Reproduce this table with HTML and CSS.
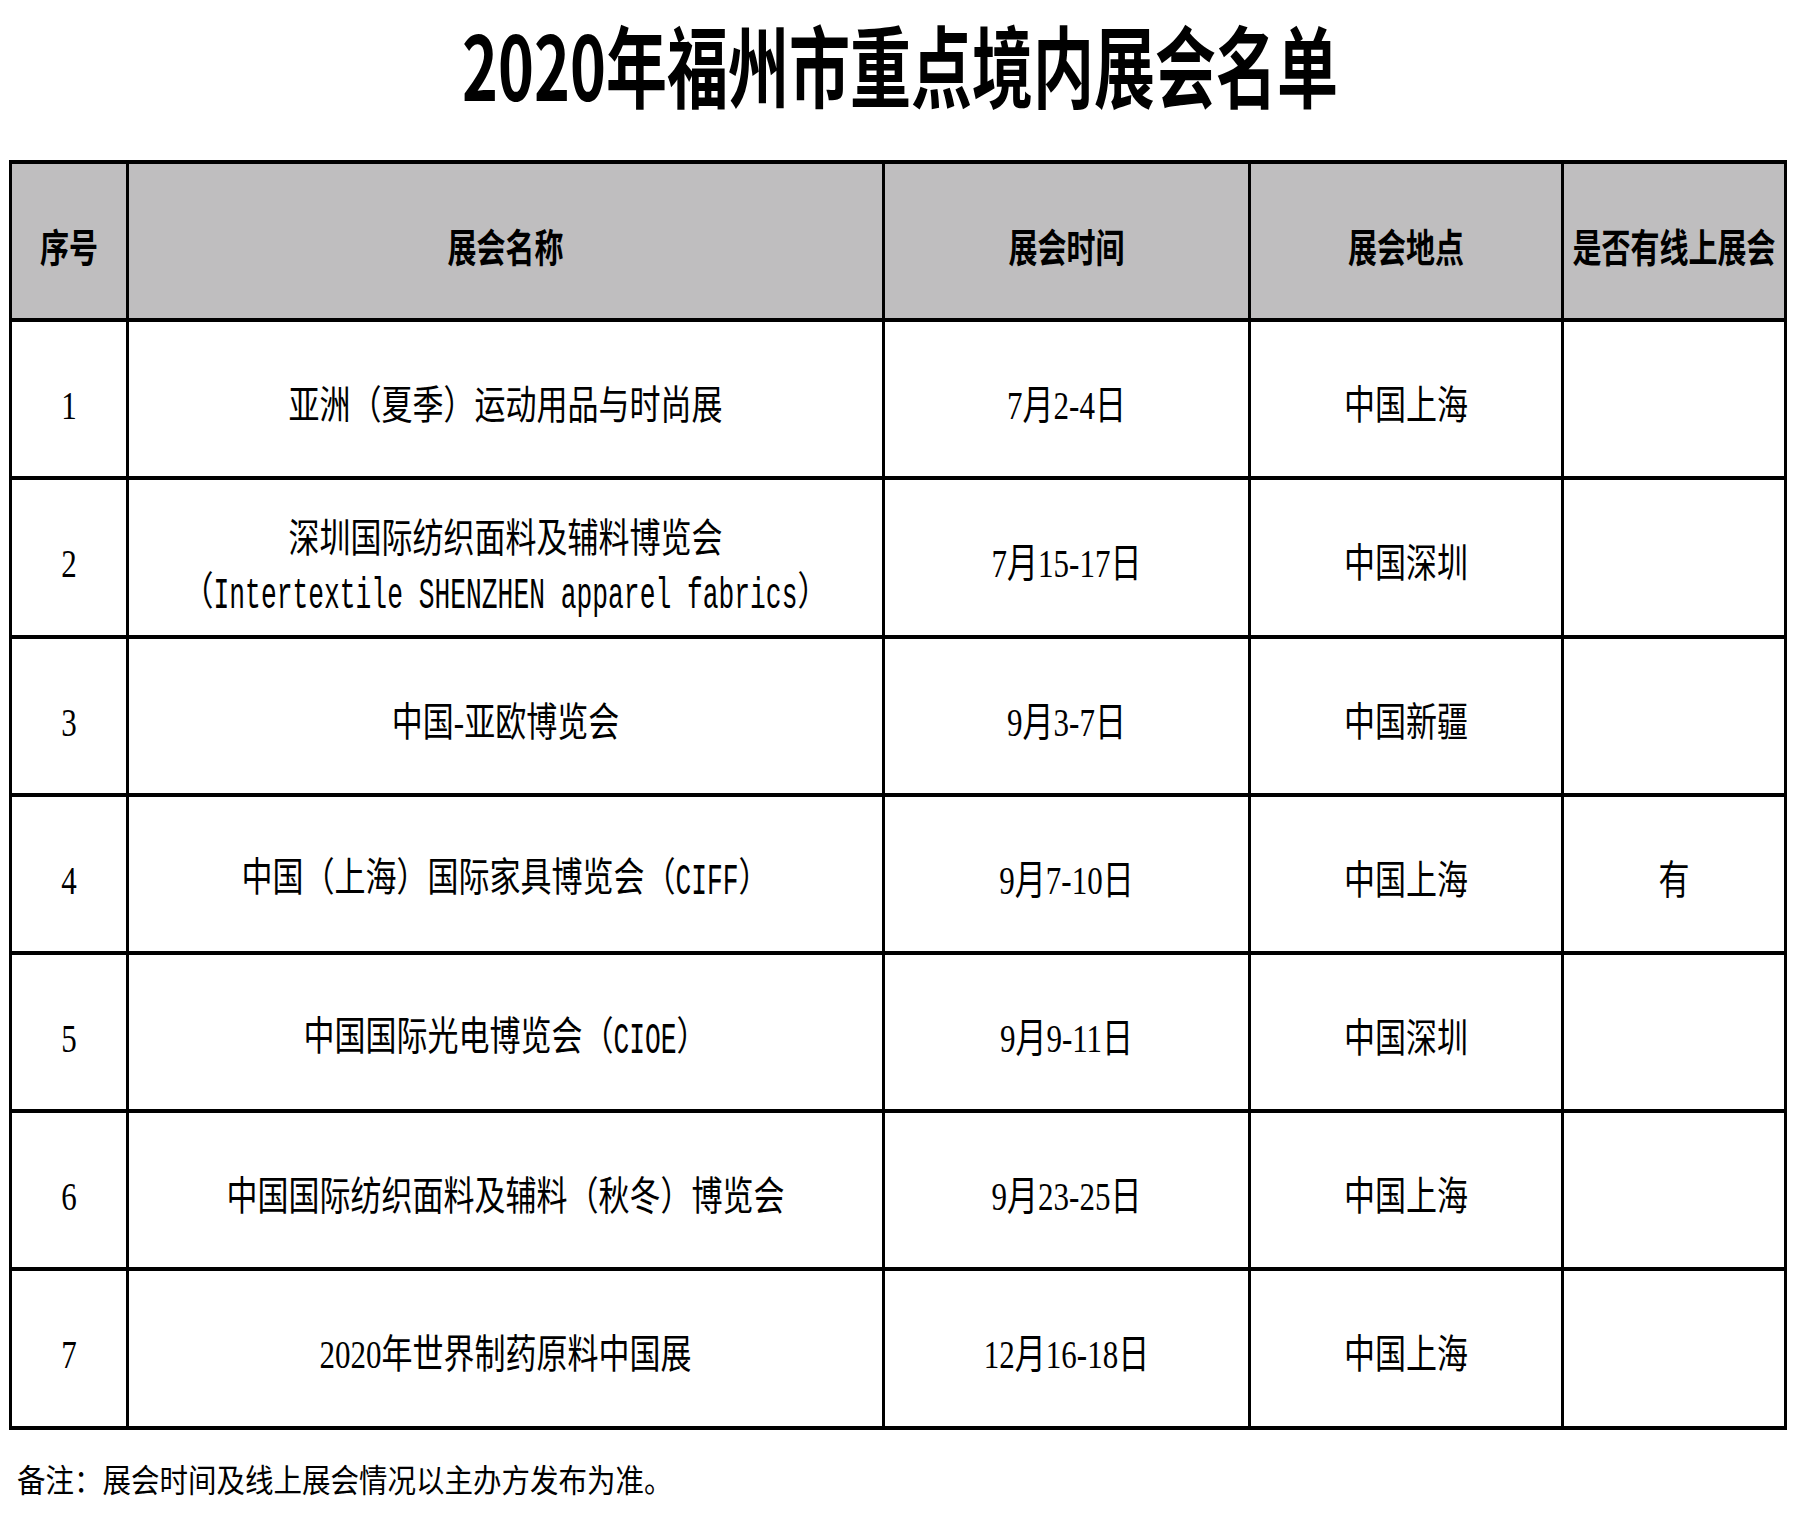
FILE: index.html
```html
<!DOCTYPE html>
<html lang="zh-CN">
<head>
<meta charset="utf-8">
<title>2020年福州市重点境内展会名单</title>
<link rel="stylesheet" href="styles.css">
</head>
<body>
<h1 class="title"><span class="sy">2020年福州市重点境内展会名单</span></h1>
<table class="list">
  <colgroup>
    <col class="c-no"><col class="c-name"><col class="c-time"><col class="c-place"><col class="c-online">
  </colgroup>
  <thead>
    <tr>
      <th><span class="sy">序号</span></th>
      <th><span class="sy">展会名称</span></th>
      <th><span class="sy">展会时间</span></th>
      <th><span class="sy">展会地点</span></th>
      <th><span class="sy">是否有线上展会</span></th>
    </tr>
  </thead>
  <tbody>
    <tr>
      <td><span class="sy">1</span></td>
      <td><span class="sy">亚洲（夏季）运动用品与时尚展</span></td>
      <td><span class="sy">7月2-4日</span></td>
      <td><span class="sy">中国上海</span></td>
      <td></td>
    </tr>
    <tr>
      <td><span class="sy">2</span></td>
      <td><span class="sy two">深圳国际纺织面料及辅料博览会<br>（<span class="mono">Intertextile SHENZHEN apparel fabrics</span>）</span></td>
      <td><span class="sy">7月15-17日</span></td>
      <td><span class="sy">中国深圳</span></td>
      <td></td>
    </tr>
    <tr>
      <td><span class="sy">3</span></td>
      <td><span class="sy">中国-亚欧博览会</span></td>
      <td><span class="sy">9月3-7日</span></td>
      <td><span class="sy">中国新疆</span></td>
      <td></td>
    </tr>
    <tr>
      <td><span class="sy">4</span></td>
      <td><span class="sy">中国（上海）国际家具博览会（<span class="mono">CIFF</span>）</span></td>
      <td><span class="sy">9月7-10日</span></td>
      <td><span class="sy">中国上海</span></td>
      <td><span class="sy">有</span></td>
    </tr>
    <tr>
      <td><span class="sy">5</span></td>
      <td><span class="sy">中国国际光电博览会（<span class="mono">CIOE</span>）</span></td>
      <td><span class="sy">9月9-11日</span></td>
      <td><span class="sy">中国深圳</span></td>
      <td></td>
    </tr>
    <tr>
      <td><span class="sy">6</span></td>
      <td><span class="sy">中国国际纺织面料及辅料（秋冬）博览会</span></td>
      <td><span class="sy">9月23-25日</span></td>
      <td><span class="sy">中国上海</span></td>
      <td></td>
    </tr>
    <tr>
      <td><span class="sy">7</span></td>
      <td><span class="sy">2020年世界制药原料中国展</span></td>
      <td><span class="sy">12月16-18日</span></td>
      <td><span class="sy">中国上海</span></td>
      <td></td>
    </tr>
  </tbody>
</table>
<p class="note"><span class="sy">备注：展会时间及线上展会情况以主办方发布为准。</span></p>
</body>
</html>
```

FILE: styles.css
```css
html, body {
  margin: 0;
  padding: 0;
  background: #ffffff;
}

body {
  width: 1800px;
  height: 1530px;
  overflow: hidden;
  color: #000000;
  font-family: "Liberation Serif", "Noto Sans CJK SC", serif;
}

.sy {
  display: inline-block;
  transform: scaleY(1.28);
}

.title {
  margin: 0;
  height: 124px;
  display: flex;
  align-items: center;
  justify-content: center;
  font-family: "Noto Sans CJK SC", sans-serif;
  font-weight: 700;
  font-size: 61px;
  line-height: 1;
}

.title .sy {
  transform: scaleY(1.45);
}

.list {
  margin: 36px 0 0 9px;
  width: 1775px;
  border-collapse: collapse;
  table-layout: fixed;
}

.c-no { width: 117px; }
.c-name { width: 756px; }
.c-time { width: 366px; }
.c-place { width: 313px; }
.c-online { width: 223px; }

.list tr {
  height: 158.2px;
}

.list th,
.list td {
  border-left: 3px solid #000;
  border-right: 3px solid #000;
  border-top: 4px solid #000;
  border-bottom: 4px solid #000;
  padding: 14px 0 0 0;
  text-align: center;
  vertical-align: middle;
  white-space: nowrap;
}

.list th {
  padding-top: 5px;
  background: #bfbebf;
  font-family: "Noto Sans CJK SC", sans-serif;
  font-weight: 700;
  font-size: 29px;
  line-height: 40px;
}

.list th .sy {
  transform: scaleY(1.35);
}

.list td {
  font-size: 31px;
  font-weight: 400;
  line-height: 40px;
}

.list td .two {
  line-height: 42px;
  margin-top: 6px;
}

.mono {
  display: inline-block;
  font-family: "Liberation Mono", monospace;
  font-size: 26.3px;
  transform: scaleY(1.3);
}

.note {
  margin: 29px 0 0 0;
  padding-left: 17px;
  font-family: "Noto Sans CJK SC", sans-serif;
  font-size: 28.5px;
  line-height: 40px;
}

.note .sy {
  transform: scaleY(1.1);
}
```
